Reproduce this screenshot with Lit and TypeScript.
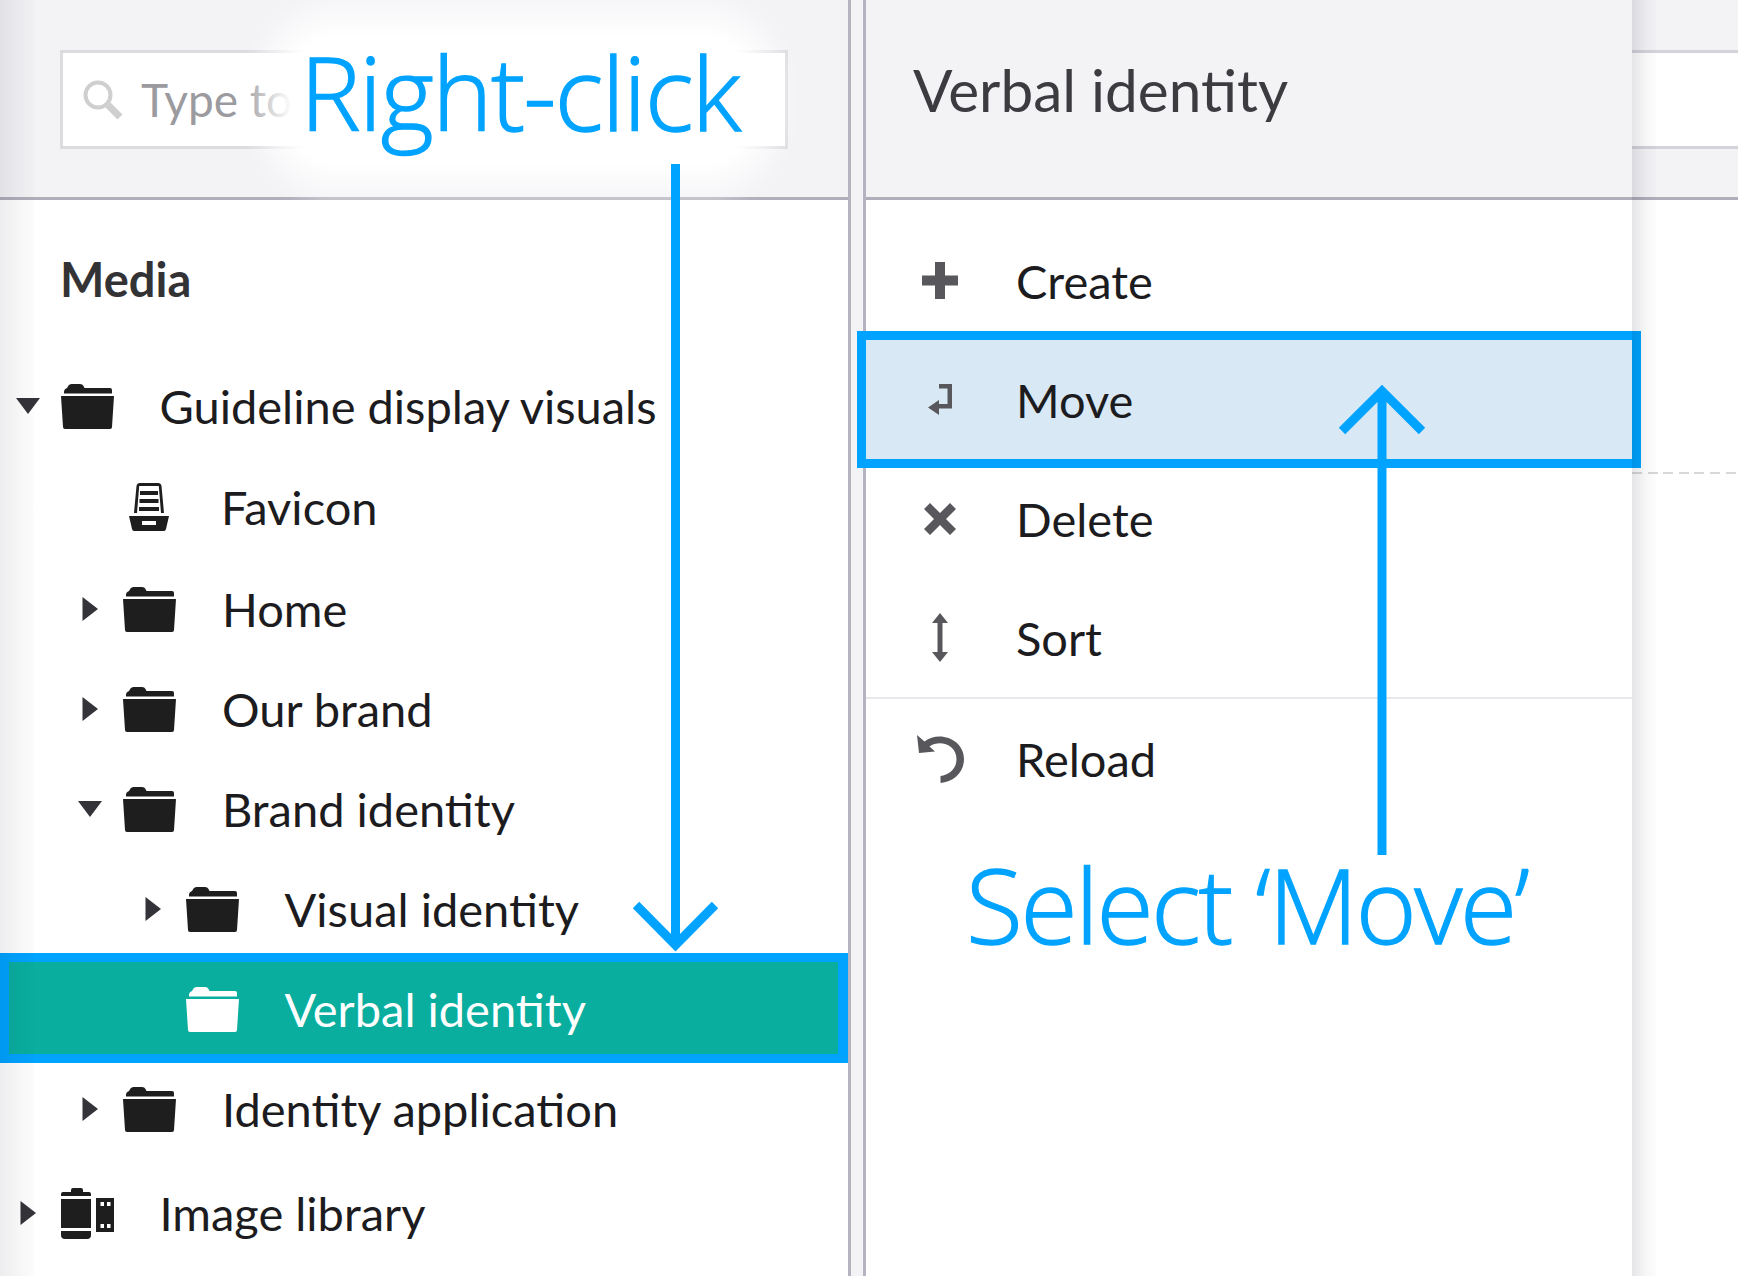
import { LitElement, html, css, svg } from 'lit';
import { customElement } from 'lit/decorators.js';

const folder = svg`<svg class="ico" width="53" height="45" viewBox="0 0 53 45" fill="currentColor"><path d="M3 9.5V8Q3 5 6 4L7.5 1.5Q8.5 0 10.500 0H19Q21.500 0 22.500 2L23.500 4H49Q51 4 51 6V9.500Z"/><path d="M0 12H53L51 43Q51 45 49 45H4Q2 45 2 43Z"/></svg>`;

const drawer = svg`<svg class="ico drawer" width="40" height="48" viewBox="0 0 40 48" fill="currentColor"><path d="M5 30 7.500 3Q8 0 11 0H29Q32 0 32.500 3L35 30H32L29.800 3H10.200L8 30Z"/><path d="M11 8H29V12H11ZM10.500 16H29.500V20H10.500ZM10 24H30V28H10Z"/><path fill-rule="evenodd" d="M0 33H40L37 46Q36.500 48 35 48H5Q3.500 48 3 46ZM13 38V42H27V38Z"/></svg>`;

const film = svg`<svg class="ico" width="53" height="51" viewBox="0 0 53 51" fill="currentColor"><path d="M10 4V2Q10 0 12 0H20Q22 0 22 2V4H28Q30 4 30 6V8H0V6Q0 4 2 4Z"/><path d="M0 11H30V40H0Z"/><path d="M0 43H30V47Q30 51 26 51H4Q0 51 0 47Z"/><path fill-rule="evenodd" d="M35 10H53V44H35ZM39.500 14V18H43V14ZM46 14V18H49.500V14ZM39.500 36V40H43V36ZM46 36V40H49.500V36Z"/></svg>`;

const tree = [
  { level: 0, label: 'Guideline display visuals', caret: 'down', icon: folder },
  { level: 1, label: 'Favicon', caret: '', icon: drawer, extra: 'n1' },
  { level: 1, label: 'Home', caret: 'right', icon: folder, extra: 'n2' },
  { level: 1, label: 'Our brand', caret: 'right', icon: folder },
  { level: 1, label: 'Brand identity', caret: 'down', icon: folder },
  { level: 2, label: 'Visual identity', caret: 'right', icon: folder },
  { level: 2, label: 'Verbal identity', caret: '', icon: folder, extra: 'selected' },
  { level: 1, label: 'Identity application', caret: 'right', icon: folder },
  { level: 0, label: 'Image library', caret: 'right', icon: film, extra: 'spaced' },
];

@customElement('app-root')
export class AppRoot extends LitElement {
  static override styles = css`
    :host {
      display: block;
      position: relative;
      width: 1738px;
      height: 1276px;
      overflow: hidden;
      background: #fff;
      font-family: Lato, 'Noto Sans', sans-serif;
      color: #1c1c20;
    }

    .columns {
      display: flex;
      height: 100%;
    }

    .panel {
      position: relative;
      display: flex;
      flex-direction: column;
      flex: none;
      overflow: hidden;
    }
    .left {
      width: 848px;
    }
    .middle {
      width: 766px;
      overflow: visible;
    }
    .right {
      flex: 1;
    }

    .gutter {
      flex: none;
      width: 18px;
      box-sizing: border-box;
      background: #f3f2f5;
      border-left: 3px solid #b5b3bf;
      border-right: 3px solid #b5b3bf;
    }

    .header {
      flex: none;
      box-sizing: border-box;
      height: 200px;
      background: #f3f2f5;
      border-bottom: 3px solid #b0aeba;
    }
    .left .header {
      padding: 50px 60px 0 60px;
    }

    .search {
      display: flex;
      align-items: center;
      box-sizing: border-box;
      height: 99px;
      padding-left: 20px;
      background: #fff;
      border: 3px solid #dcdbe0;
      color: #9b9b9f;
      font-size: 46px;
      gap: 18px;
    }
    .search svg {
      flex: none;
    }

    .heading {
      padding: 56px 0 0 60px;
      height: 99px;
      box-sizing: border-box;
      font-size: 47px;
      line-height: 47px;
      font-weight: 700;
      color: #333336;
    }

    .tree {
      margin-top: 57px;
    }

    .row {
      display: flex;
      align-items: center;
      box-sizing: border-box;
      height: 100px;
      font-size: 47px;
      white-space: nowrap;
    }
    .row.n1 {
      margin-top: 1px;
    }
    .row.n2 {
      margin-top: 2px;
    }
    .row.spaced {
      margin-top: 4px;
    }
    .row.selected {
      height: 92px;
      margin: 3px 0 5px;
      padding-top: 2px;
      background: #09ae9f;
      color: #fff;
      box-shadow: inset 9px 0 0 #00a3ff, inset -10px 0 0 #00a3ff, 0 -9px 0 #00a3ff, 0 9px 0 #00a3ff;
    }

    .caret {
      flex: none;
      width: 45px;
      display: flex;
    }
    .caret svg {
      fill: #333339;
    }

    .ico {
      flex: none;
      margin-right: 46px;
      color: #1f1e1e;
    }
    .selected .ico {
      color: #fff;
    }
    .ico.drawer {
      margin: 0 52px 0 6px;
    }

    .shade {
      position: absolute;
      top: 0;
      bottom: 0;
      left: 0;
      width: 34px;
      background: linear-gradient(to right, rgba(0, 0, 30, 0.07), rgba(0, 0, 30, 0.03) 60%, rgba(0, 30, 30, 0.01));
      pointer-events: none;
    }
    .right .shade {
      width: 24px;
      background: linear-gradient(to right, rgba(0, 0, 30, 0.1), rgba(0, 0, 30, 0.03) 60%, rgba(0, 30, 30, 0.01));
    }

    .title {
      padding: 56px 0 0 47px;
      font-size: 58.5px;
      line-height: 66px;
      color: #3c3c40;
    }

    .menu {
      margin-top: 21px;
    }
    .item {
      display: flex;
      align-items: center;
      height: 119px;
      padding-left: 50px;
      font-size: 47px;
      color: #1c1c20;
    }
    .item.active {
      background: #d8e9f5;
      outline: 9px solid #00a3ff;
    }
    .item.rule {
      height: 122px;
      border-top: 2px solid #e8e8ec;
      box-sizing: border-box;
    }
    .glyph {
      flex: none;
      width: 48px;
      margin-right: 52px;
      display: flex;
      justify-content: center;
    }
    .glyph svg {
      color: #58585c;
    }

    .field {
      margin-top: 50px;
      height: 99px;
      box-sizing: border-box;
      background: #fff;
      border-top: 3px solid #d4d3d9;
      border-bottom: 3px solid #d4d3d9;
    }
    .dash {
      margin-top: 272px;
      height: 2px;
      background: repeating-linear-gradient(to right, #d8d8da 0 10px, transparent 10px 15.6px);
    }

    .glow {
      position: absolute;
      left: 278px;
      top: 24px;
      width: 484px;
      height: 152px;
      border-radius: 60px;
      background: #fff;
      box-shadow: 0 0 0 24px rgba(255, 255, 255, 0.5);
      filter: blur(10px);
    }

    .note {
      position: absolute;
      font-family: 'Open Sans', sans-serif;
      font-weight: 300;
      color: #00a3ff;
      -webkit-text-stroke: 1.4px #00a3ff;
      white-space: nowrap;
      line-height: 1;
    }
    .note.click {
      left: 300px;
      top: 41px;
      font-size: 102px;
      letter-spacing: -1.5px;
    }
    .note.pick {
      left: 966px;
      top: 852px;
      font-size: 104px;
      letter-spacing: -2.3px;
    }

    .arrows {
      position: absolute;
      inset: 0;
      pointer-events: none;
    }
    .arrows path {
      fill: none;
      stroke: #00a3ff;
      stroke-width: 9;
    }
  `;

  private caret(kind: string) {
    if (kind === 'down')
      return html`<svg width="24" height="16" viewBox="0 0 24 16"><path d="M0 0H24L12 16Z" /></svg>`;
    if (kind === 'right')
      return html`<svg width="24" height="24" viewBox="0 0 24 24"><path d="M4.500 0 20 12 4.500 24Z" /></svg>`;
    return html`<svg width="24" height="16"></svg>`;
  }

  private row(r: (typeof tree)[number]) {
    return html`
      <div class="row ${r.extra ?? ''}" style="padding-left: ${15.5 + r.level * 62.5}px">
        <span class="caret">${this.caret(r.caret)}</span>
        ${r.icon}
        <span>${r.label}</span>
      </div>
    `;
  }

  override render() {
    return html`
      <div class="columns">
        <section class="panel left">
          <div class="header">
            <div class="search">
              <svg width="40" height="40" viewBox="0 0 40 40" fill="none" stroke="#cfcfcf">
                <circle cx="15" cy="15" r="12.500" stroke-width="4" />
                <path d="M25 25 37 37" stroke-width="7" />
              </svg>
              <span>Type to</span>
            </div>
          </div>
          <div class="heading">Media</div>
          <div class="tree">${tree.map((r) => this.row(r))}</div>
          <div class="shade"></div>
        </section>
        <div class="gutter"></div>
        <section class="panel middle">
          <div class="header title">Verbal identity</div>
          <div class="menu">
            <div class="item">
              <span class="glyph"><svg width="36" height="37" viewBox="0 0 36 37" fill="currentColor"><path d="M13 0H23V13.500H36V23.500H23V37H13V23.500H0V13.500H13Z" /></svg></span>
              Create
            </div>
            <div class="item active">
              <span class="glyph"><svg width="24" height="31" viewBox="0 0 24 31" fill="currentColor"><path d="M11 0H24V24.500H11V31L0 23.500 11 16V20H19.500V4.500H11Z" /></svg></span>
              Move
            </div>
            <div class="item">
              <span class="glyph"><svg width="32" height="32" viewBox="0 0 32 32" fill="currentColor"><path d="M6 0 16 10 26 0 32 6 22 16 32 26 26 32 16 22 6 32 0 26 10 16 0 6Z" /></svg></span>
              Delete
            </div>
            <div class="item">
              <span class="glyph"><svg width="16" height="49" viewBox="0 0 16 49" fill="currentColor"><path d="M8 0 16 10H10.500V39H16L8 49 0 39H5.500V10H0Z" /></svg></span>
              Sort
            </div>
            <div class="item rule">
              <span class="glyph"><svg width="47" height="48" viewBox="0 0 47 48" fill="currentColor"><path d="M0 0 2 18 18 16.500 12.500 11.500C22 4.500 39.500 9 39.500 24 39.500 34 32 40 23.500 41V48C36 47 47 38 47 24 47 4 22 -5 7.500 6.500Z" /></svg></span>
              Reload
            </div>
          </div>
        </section>
        <section class="panel right">
          <div class="header"><div class="field"></div></div>
          <div class="dash"></div>
          <div class="shade"></div>
        </section>
      </div>
      <div class="glow"></div>
      <div class="note click">Right-click</div>
      <div class="note pick">Select ‘Move’</div>
      <svg class="arrows" width="1738" height="1276" viewBox="0 0 1738 1276">
        <path d="M675.500 164V945M636 905 675.500 945 715 905" />
        <path d="M1382 855V392M1342 431 1382 391 1422 431" />
      </svg>
    `;
  }
}
